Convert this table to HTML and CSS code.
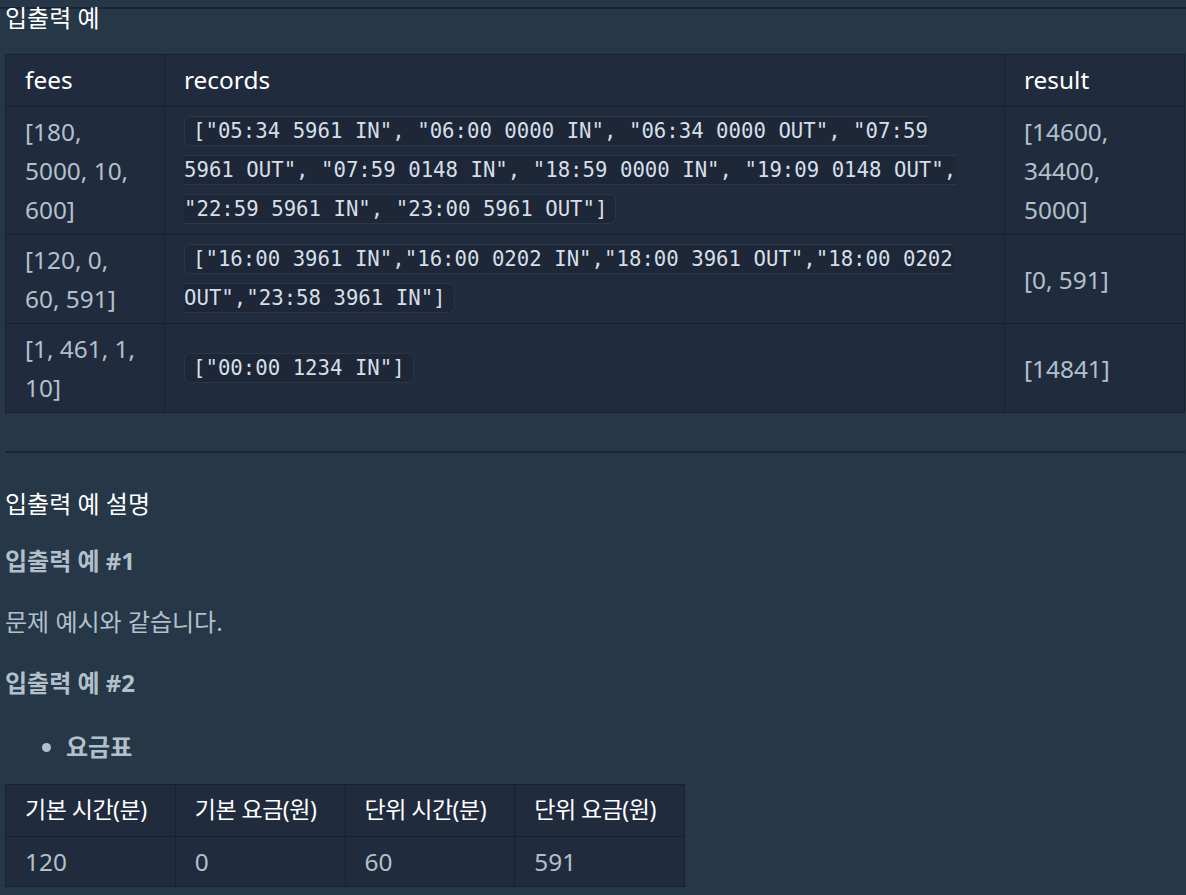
FILE: index.html
```html
<html>
<head>
<link rel="stylesheet" href="styles.css">
</head>

<body>
	<div class="top-rule"></div>
	<div class="page">
		<h5 class="example-title">입출력 예</h5>

		<table class="examples">
		  <colgroup>
		    <col class="col-fees">
		    <col class="col-records">
		    <col class="col-result">
		  </colgroup>
		  <thead>
		  <tr>
		    <th>fees</th>
		    <th>records</th>
		    <th>result</th>
		  </tr>
		  </thead>
		  <tbody>
		  <tr>
		    <td>[180, 5000, 10, 600]</td>
		    <td><code>["05:34 5961 IN", "06:00 0000 IN", "06:34 0000 OUT", "07:59<br>5961 OUT", "07:59 0148 IN", "18:59 0000 IN", "19:09 0148 OUT",<br>"22:59 5961 IN", "23:00 5961 OUT"]</code></td>
		    <td>[14600, 34400, 5000]</td>
		  </tr>
		  <tr>
		    <td>[120, 0, 60, 591]</td>
		    <td><code>["16:00 3961 IN","16:00 0202 IN","18:00 3961 OUT","18:00 0202<br>OUT","23:58 3961 IN"]</code></td>
		    <td>[0, 591]</td>
		  </tr>
		  <tr>
		    <td>[1, 461, 1, 10]</td>
		    <td><code>["00:00 1234 IN"]</code></td>
		    <td>[14841]</td>
		  </tr>
		  </tbody>
		</table>

		<hr class="divider">

		<h5 class="desc-title">입출력 예 설명</h5>

		<h6 class="sub-title">입출력 예 #1</h6>
		<p class="text">문제 예시와 같습니다.</p>

		<h6 class="sub-title">입출력 예 #2</h6>
		<ul class="bullets">
		  <li>요금표</li>
		</ul>

		<table class="fee-table">
		  <thead>
		  <tr>
		    <th>기본 시간(분)</th>
		    <th>기본 요금(원)</th>
		    <th>단위 시간(분)</th>
		    <th>단위 요금(원)</th>
		  </tr>
		  </thead>
		  <tbody>
		  <tr>
		    <td>120</td>
		    <td>0</td>
		    <td>60</td>
		    <td>591</td>
		  </tr>
		  </tbody>
		</table>
	</div>
</body>
</html>
```

FILE: styles.css
```css
body {
    margin: 0;
    background-color: #263747;
    color: #b2c0cc;
    font-family: "Noto Sans", "Noto Sans CJK KR", sans-serif;
}

.top-rule {
    height: 7px;
    border-bottom: 2px solid #1b2433;
}

.page {
    padding: 0 1px 0 5px;
}

.example-title {
    margin: 0;
    font-size: 24px;
    line-height: 17px;
    font-weight: normal;
    color: #ffffff;
}

table {
    border-collapse: collapse;
    background-color: #202b3d;
    font-size: 24.4px;
    line-height: 39px;
}

th, td {
    border: 1px solid #172130;
    text-align: left;
    vertical-align: middle;
}

th {
    font-weight: normal;
    color: #ffffff;
    padding: 5px 19px 7px;
}

td {
    padding: 5px 19px;
}

.examples {
    margin-top: 28px;
    width: 1180px;
    table-layout: fixed;
}

.col-fees { width: 159px; }
.col-result { width: 180px; }

code {
    font-family: "DejaVu Sans Mono", monospace;
    font-size: 20.7px;
    color: #d6dfe8;
    background-color: #1d2738;
    border: 1px solid #2a374a;
    border-radius: 6px;
    padding: 2px 8px;
}

.divider {
    margin: 38px 0 0;
    border: 0;
    border-top: 2px solid #1b2433;
}

.desc-title {
    margin: 31px 0 0;
    font-size: 24px;
    line-height: 39px;
    font-weight: normal;
    color: #ffffff;
}

.sub-title {
    margin: 18px 0 0;
    font-size: 24px;
    line-height: 39px;
    font-weight: bold;
    color: #b2c0cc;
}

.text + .sub-title {
    margin-top: 22px;
}

.text {
    margin: 22px 0 0;
    font-size: 24px;
    line-height: 39px;
}

.bullets {
    margin: 25px 0 0;
    padding-left: 61px;
    font-size: 24px;
    line-height: 39px;
    font-weight: bold;
}

.fee-table {
    margin-top: 18px;
    width: 680px;
    table-layout: fixed;
}

.fee-table th {
    font-size: 23px;
    letter-spacing: -0.5px;
    white-space: nowrap;
}
```
